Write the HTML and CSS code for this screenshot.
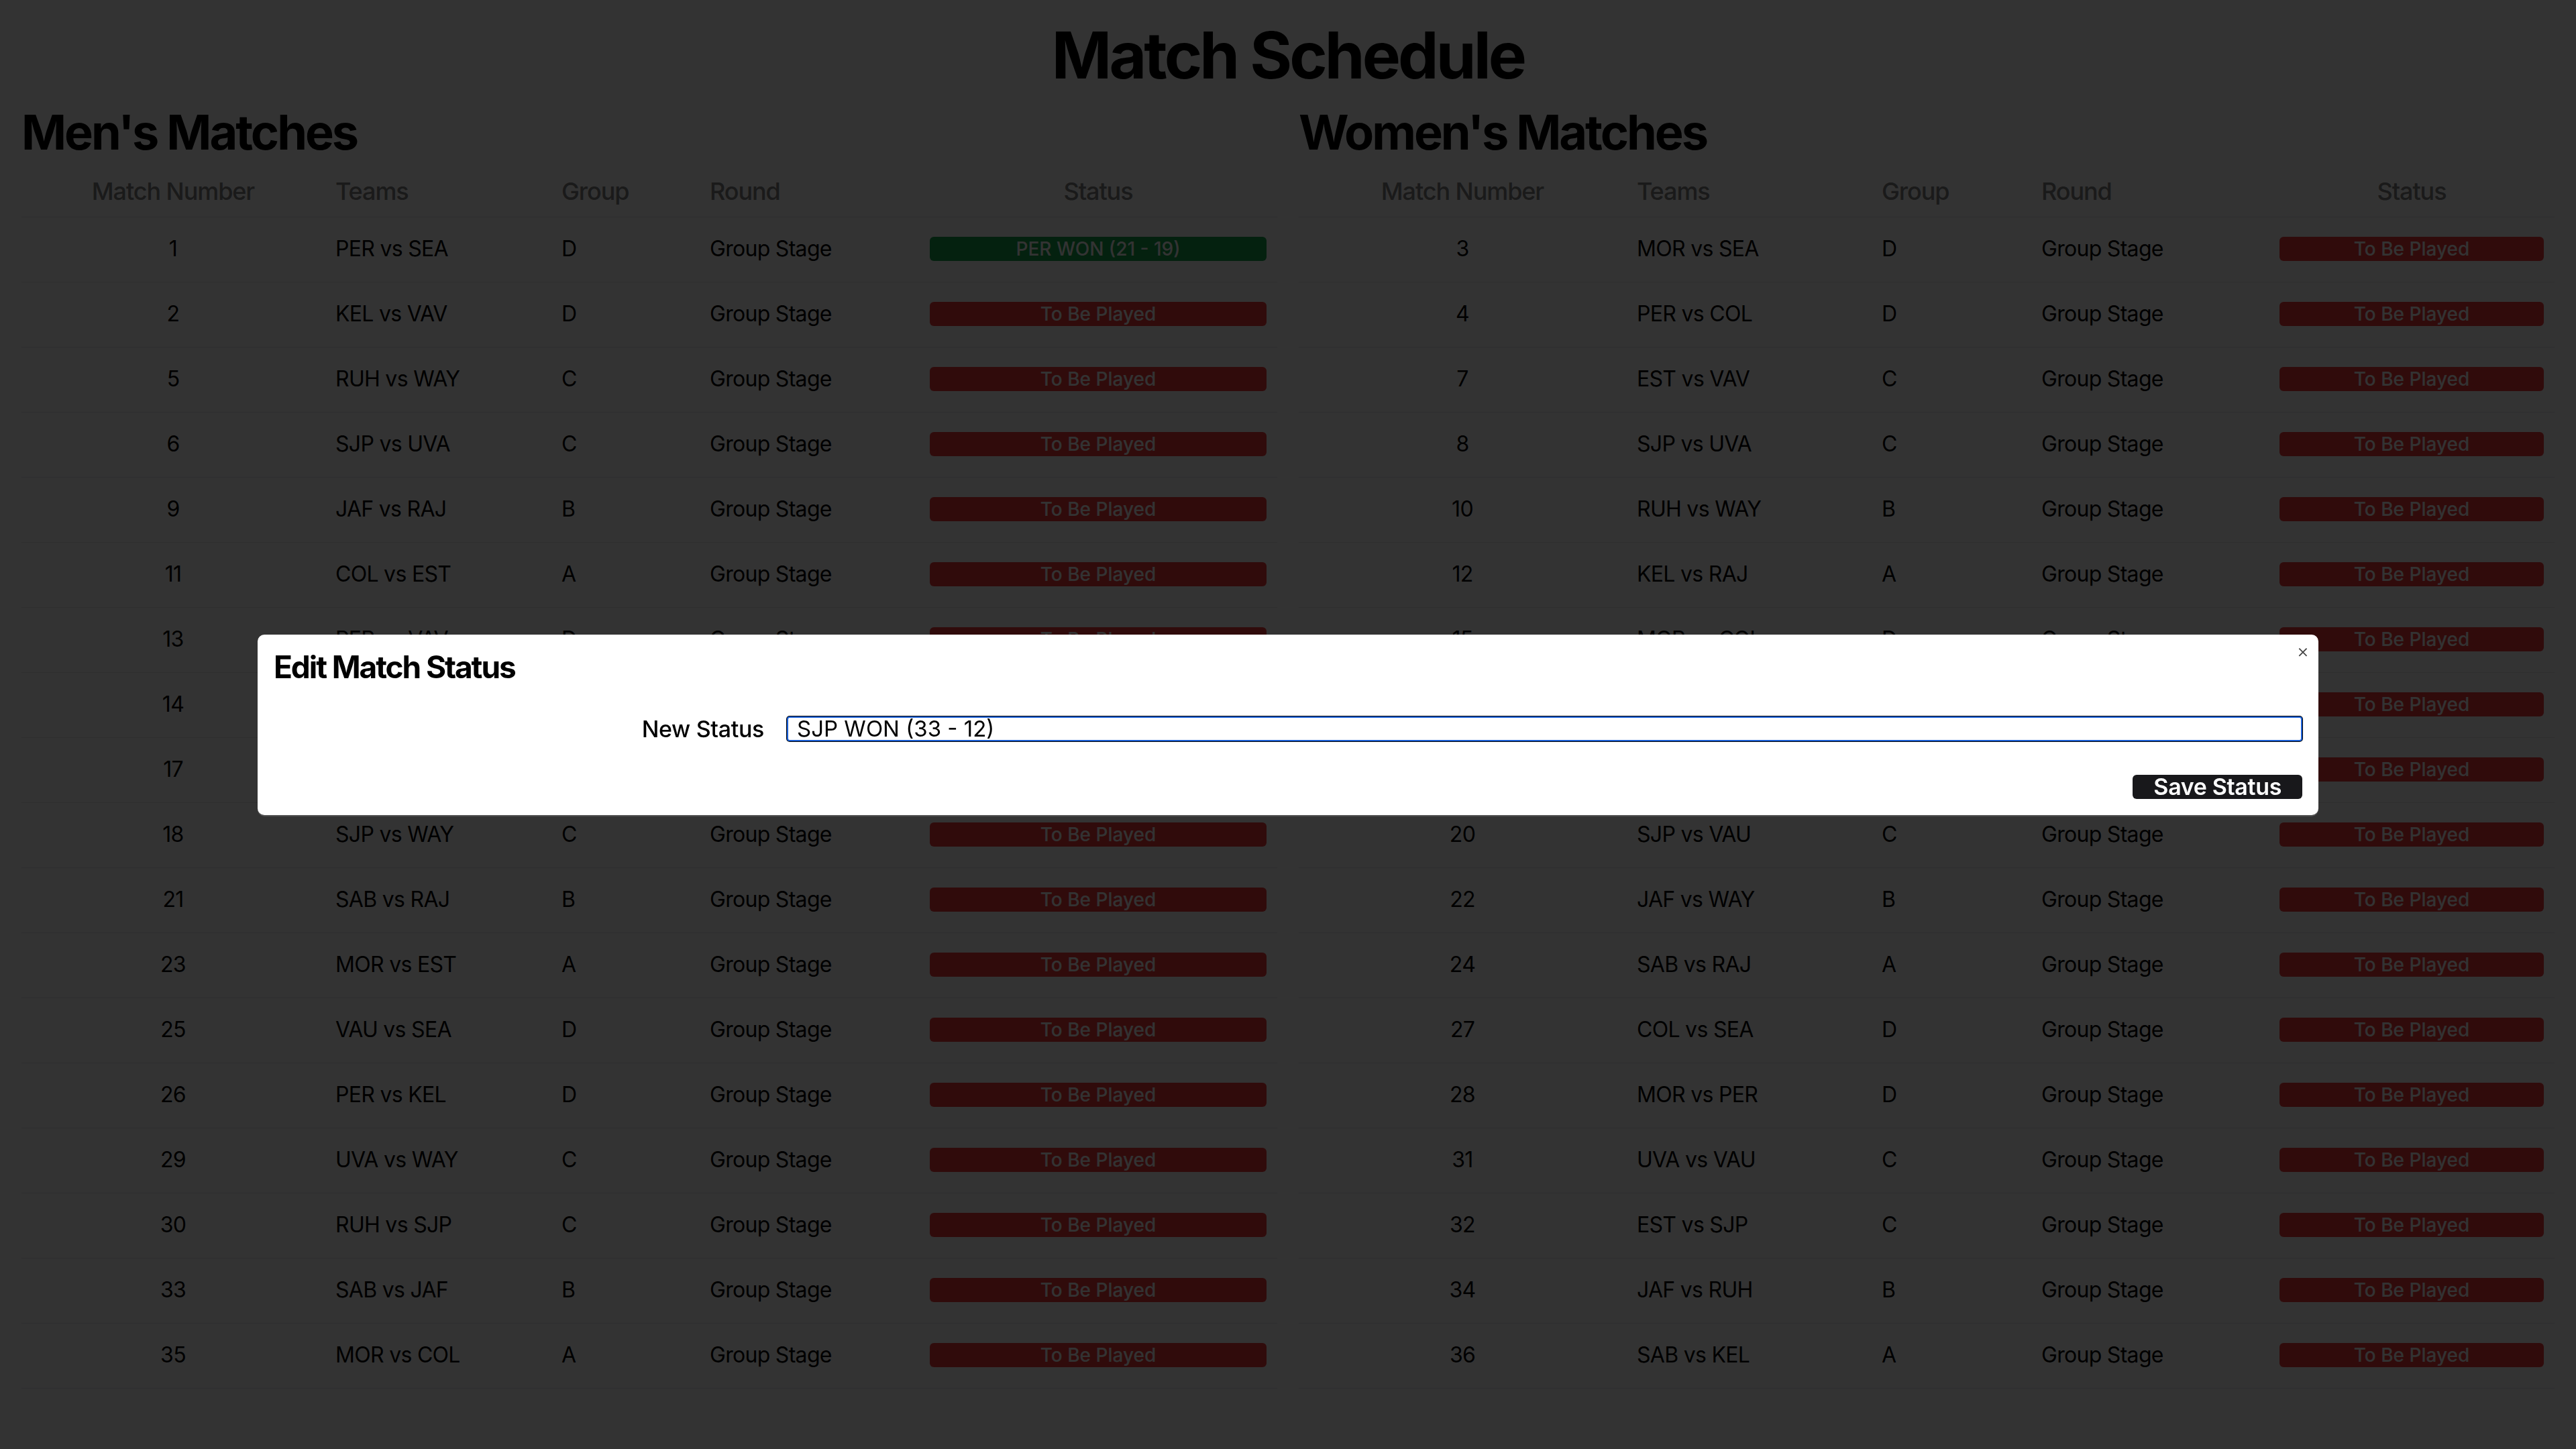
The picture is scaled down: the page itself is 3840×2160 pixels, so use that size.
FILE: index.html
```html
<!DOCTYPE html>
<html lang="en">
<head>
<meta charset="utf-8">
<title>Match Schedule</title>
<link rel="stylesheet" href="styles.css">
</head>
<body>
<h1 class="page-title">Match Schedule</h1>
<div class="columns">
  <section class="panel">
    <h2 class="panel-title">Men's Matches</h2>
    <table class="schedule">
      <colgroup>
        <col class="m-c1"><col class="m-c2"><col class="m-c3"><col class="m-c4"><col class="m-c5">
      </colgroup>
      <thead>
        <tr><th class="center">Match Number</th><th>Teams</th><th>Group</th><th>Round</th><th class="center">Status</th></tr>
      </thead>
      <tbody>
        <tr><td class="center">1</td><td>PER vs SEA</td><td>D</td><td>Group Stage</td><td><span class="badge won">PER WON (21 - 19)</span></td></tr>
        <tr><td class="center">2</td><td>KEL vs VAV</td><td>D</td><td>Group Stage</td><td><span class="badge">To Be Played</span></td></tr>
        <tr><td class="center">5</td><td>RUH vs WAY</td><td>C</td><td>Group Stage</td><td><span class="badge">To Be Played</span></td></tr>
        <tr><td class="center">6</td><td>SJP vs UVA</td><td>C</td><td>Group Stage</td><td><span class="badge">To Be Played</span></td></tr>
        <tr><td class="center">9</td><td>JAF vs RAJ</td><td>B</td><td>Group Stage</td><td><span class="badge">To Be Played</span></td></tr>
        <tr><td class="center">11</td><td>COL vs EST</td><td>A</td><td>Group Stage</td><td><span class="badge">To Be Played</span></td></tr>
        <tr><td class="center">13</td><td>PER vs VAV</td><td>D</td><td>Group Stage</td><td><span class="badge">To Be Played</span></td></tr>
        <tr><td class="center">14</td><td>KEL vs SEA</td><td>D</td><td>Group Stage</td><td><span class="badge">To Be Played</span></td></tr>
        <tr><td class="center">17</td><td>RUH vs UVA</td><td>C</td><td>Group Stage</td><td><span class="badge">To Be Played</span></td></tr>
        <tr><td class="center">18</td><td>SJP vs WAY</td><td>C</td><td>Group Stage</td><td><span class="badge">To Be Played</span></td></tr>
        <tr><td class="center">21</td><td>SAB vs RAJ</td><td>B</td><td>Group Stage</td><td><span class="badge">To Be Played</span></td></tr>
        <tr><td class="center">23</td><td>MOR vs EST</td><td>A</td><td>Group Stage</td><td><span class="badge">To Be Played</span></td></tr>
        <tr><td class="center">25</td><td>VAU vs SEA</td><td>D</td><td>Group Stage</td><td><span class="badge">To Be Played</span></td></tr>
        <tr><td class="center">26</td><td>PER vs KEL</td><td>D</td><td>Group Stage</td><td><span class="badge">To Be Played</span></td></tr>
        <tr><td class="center">29</td><td>UVA vs WAY</td><td>C</td><td>Group Stage</td><td><span class="badge">To Be Played</span></td></tr>
        <tr><td class="center">30</td><td>RUH vs SJP</td><td>C</td><td>Group Stage</td><td><span class="badge">To Be Played</span></td></tr>
        <tr><td class="center">33</td><td>SAB vs JAF</td><td>B</td><td>Group Stage</td><td><span class="badge">To Be Played</span></td></tr>
        <tr><td class="center">35</td><td>MOR vs COL</td><td>A</td><td>Group Stage</td><td><span class="badge">To Be Played</span></td></tr>
      </tbody>
    </table>
  </section>
  <section class="panel">
    <h2 class="panel-title">Women's Matches</h2>
    <table class="schedule">
      <colgroup>
        <col class="w-c1"><col class="w-c2"><col class="w-c3"><col class="w-c4"><col class="w-c5">
      </colgroup>
      <thead>
        <tr><th class="center">Match Number</th><th>Teams</th><th>Group</th><th>Round</th><th class="center">Status</th></tr>
      </thead>
      <tbody>
        <tr><td class="center">3</td><td>MOR vs SEA</td><td>D</td><td>Group Stage</td><td><span class="badge">To Be Played</span></td></tr>
        <tr><td class="center">4</td><td>PER vs COL</td><td>D</td><td>Group Stage</td><td><span class="badge">To Be Played</span></td></tr>
        <tr><td class="center">7</td><td>EST vs VAV</td><td>C</td><td>Group Stage</td><td><span class="badge">To Be Played</span></td></tr>
        <tr><td class="center">8</td><td>SJP vs UVA</td><td>C</td><td>Group Stage</td><td><span class="badge">To Be Played</span></td></tr>
        <tr><td class="center">10</td><td>RUH vs WAY</td><td>B</td><td>Group Stage</td><td><span class="badge">To Be Played</span></td></tr>
        <tr><td class="center">12</td><td>KEL vs RAJ</td><td>A</td><td>Group Stage</td><td><span class="badge">To Be Played</span></td></tr>
        <tr><td class="center">15</td><td>MOR vs COL</td><td>D</td><td>Group Stage</td><td><span class="badge">To Be Played</span></td></tr>
        <tr><td class="center">16</td><td>PER vs SEA</td><td>D</td><td>Group Stage</td><td><span class="badge">To Be Played</span></td></tr>
        <tr><td class="center">19</td><td>EST vs UVA</td><td>C</td><td>Group Stage</td><td><span class="badge">To Be Played</span></td></tr>
        <tr><td class="center">20</td><td>SJP vs VAU</td><td>C</td><td>Group Stage</td><td><span class="badge">To Be Played</span></td></tr>
        <tr><td class="center">22</td><td>JAF vs WAY</td><td>B</td><td>Group Stage</td><td><span class="badge">To Be Played</span></td></tr>
        <tr><td class="center">24</td><td>SAB vs RAJ</td><td>A</td><td>Group Stage</td><td><span class="badge">To Be Played</span></td></tr>
        <tr><td class="center">27</td><td>COL vs SEA</td><td>D</td><td>Group Stage</td><td><span class="badge">To Be Played</span></td></tr>
        <tr><td class="center">28</td><td>MOR vs PER</td><td>D</td><td>Group Stage</td><td><span class="badge">To Be Played</span></td></tr>
        <tr><td class="center">31</td><td>UVA vs VAU</td><td>C</td><td>Group Stage</td><td><span class="badge">To Be Played</span></td></tr>
        <tr><td class="center">32</td><td>EST vs SJP</td><td>C</td><td>Group Stage</td><td><span class="badge">To Be Played</span></td></tr>
        <tr><td class="center">34</td><td>JAF vs RUH</td><td>B</td><td>Group Stage</td><td><span class="badge">To Be Played</span></td></tr>
        <tr><td class="center">36</td><td>SAB vs KEL</td><td>A</td><td>Group Stage</td><td><span class="badge">To Be Played</span></td></tr>
      </tbody>
    </table>
  </section>
</div>

<div class="overlay">
  <div class="modal">
    <button class="close" type="button">×</button>
    <h3 class="modal-title">Edit Match Status</h3>
    <div class="form-row">
      <label class="form-label" for="status">New Status</label>
      <input class="form-input" id="status" type="text" value="SJP WON (33 - 12)">
    </div>
    <div class="actions">
      <button class="save" type="button">Save Status</button>
    </div>
  </div>
</div>
</body>
</html>
```

FILE: styles.css
```css
* { box-sizing: border-box; }

html, body {
  margin: 0;
  padding: 0;
  background: #ffffff;
  color: #111111;
  font-family: Inter, "Noto Sans", Arial, sans-serif;
}

.page-title {
  margin: 25px 0 0;
  font-size: 96px;
  line-height: 115px;
  font-weight: 700;
  letter-spacing: -0.04em;
  text-align: center;
  color: #000;
}

.columns {
  display: grid;
  grid-template-columns: 1fr 1fr;
  column-gap: 32px;
  padding: 0 32px;
}

.panel-title {
  margin: 14px 0 0;
  font-size: 72px;
  line-height: 86px;
  font-weight: 700;
  letter-spacing: -0.042em;
  color: #000;
}

.schedule {
  width: 100%;
  border-collapse: collapse;
  table-layout: fixed;
}

.m-c1 { width: 452px; }
.m-c2 { width: 337px; }
.m-c3 { width: 221px; }
.m-c4 { width: 328px; }
.m-c5 { width: 534px; }

.w-c1 { width: 488px; }
.w-c2 { width: 365px; }
.w-c3 { width: 238px; }
.w-c4 { width: 355px; }
.w-c5 { width: 426px; }

.schedule tr {
  border-bottom: 1px solid #e5e7eb;
}

.schedule th {
  padding: 18px 16px 11px;
  font-size: 36px;
  line-height: 54px;
  font-weight: 500;
  letter-spacing: -0.03em;
  color: #808080;
  text-align: left;
  white-space: nowrap;
}

.schedule td {
  padding: 23px 16px 25px;
  font-size: 32px;
  line-height: 48px;
  letter-spacing: -0.022em;
  color: #000;
  text-align: left;
  vertical-align: middle;
  white-space: nowrap;
}

.schedule .center { text-align: center; }

.badge {
  display: block;
  height: 36px;
  line-height: 36px;
  border-radius: 6px;
  background: #ef3b3b;
  color: #ffffff;
  font-size: 28px;
  font-weight: 500;
  letter-spacing: 0;
  text-align: center;
}

.badge.won { background: #16a34a; }

.overlay {
  position: fixed;
  inset: 0;
  background: rgba(0, 0, 0, 0.8);
  display: flex;
  align-items: center;
  justify-content: center;
}

.modal {
  position: relative;
  width: 80%;
  background: #ffffff;
  border-radius: 10px;
  padding: 24px;
  box-shadow: 0 2px 0 rgba(255, 255, 255, 0.15);
}

.close {
  position: absolute;
  top: 10px;
  right: 14px;
  padding: 0;
  border: none;
  background: none;
  font-family: Inter, "Noto Sans", Arial, sans-serif;
  font-size: 28px;
  line-height: 28px;
  font-weight: 300;
  color: #444;
}

.modal-title {
  margin: 0;
  font-size: 46px;
  line-height: 48px;
  font-weight: 700;
  letter-spacing: -0.045em;
  color: #000;
}

.form-row {
  display: grid;
  grid-template-columns: 731px 1fr;
  column-gap: 34px;
  align-items: center;
  margin-top: 50px;
}

.form-label {
  font-size: 34px;
  line-height: 37px;
  font-weight: 500;
  letter-spacing: -0.01em;
  text-align: right;
  color: #000;
}

.form-input {
  height: 37px;
  width: 100%;
  padding: 0 13px;
  border: 2px solid #1a5fd6;
  border-radius: 4px;
  box-shadow: 0 0 0 1px #000;
  outline: none;
  font-family: Inter, "Noto Sans", Arial, sans-serif;
  font-size: 33px;
  color: #000;
  background: #fff;
}

.actions {
  display: flex;
  justify-content: flex-end;
  margin-top: 50px;
}

.save {
  height: 36px;
  padding: 0 31px;
  border: none;
  border-radius: 6px;
  background: #18181b;
  color: #ffffff;
  font-family: Inter, "Noto Sans", Arial, sans-serif;
  font-size: 34px;
  line-height: 36px;
  font-weight: 600;
  letter-spacing: -0.01em;
}
```
